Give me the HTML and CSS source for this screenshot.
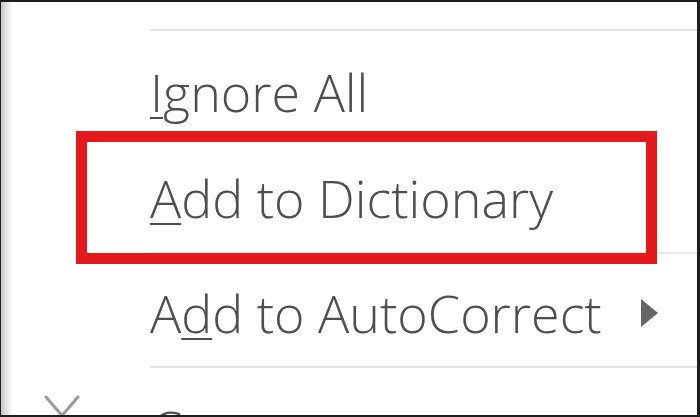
FILE: index.html
```html
<!DOCTYPE html>
<html lang="en">
<head>
<meta charset="utf-8">
<title>Spelling context menu</title>
<link rel="stylesheet" href="styles.css">
</head>
<body>
<div class="menu">
  <div class="item faded"><span class="icon"></span><span class="label">notes</span></div>
  <div class="sep first"></div>
  <div class="item ignore"><span class="icon"></span><span class="label"><u>I</u>gnore All</span></div>
  <div class="item dict"><span class="icon"></span><span class="label"><u>A</u>dd to Dictionary</span></div>
  <div class="sep mid"></div>
  <div class="item auto"><span class="icon"></span><span class="label">A<u>d</u>d to AutoCorrect</span><span class="arrow"></span></div>
  <div class="sep"></div>
  <div class="item cut">
    <span class="icon">
      <svg class="scissors" width="148" height="68" viewBox="0 0 148 68" aria-hidden="true">
        <line x1="45" y1="2" x2="70" y2="31" />
        <line x1="77" y1="2" x2="52" y2="31" />
      </svg>
    </span>
    <span class="label">Cut</span>
  </div>
  <div class="highlight"></div>
</div>
</body>
</html>
```

FILE: styles.css
```css
html, body {
  margin: 0;
  padding: 0;
  background: #ffffff;
}

.menu {
  position: relative;
  width: 700px;
  height: 417px;
  box-sizing: border-box;
  overflow: hidden;
  border-top: 2px solid #1e1e1e;
  border-right: 3px solid #1e1e1e;
  border-bottom: 2px solid #1e1e1e;
  border-left: 1px solid #1e1e1e;
  background: linear-gradient(to right, #c4c4c4 0, #dcdcdc 4px, #f4f4f4 9px, #ffffff 13px);
  font-family: "Open Sans", "Noto Sans", "Liberation Sans", sans-serif;
  font-size: 52px;
  font-weight: 300;
  color: #4e4e4e;
}

.item {
  display: grid;
  grid-template-columns: 149px 1fr auto;
  align-items: center;
  line-height: 68px;
  white-space: nowrap;
}

.icon {
  display: block;
  height: 68px;
}

.label u {
  text-decoration-thickness: 2px;
  text-underline-offset: 5px;
}

.faded {
  margin-top: -49px;
  color: #dedede;
  font-size: 40px;
}

.sep {
  height: 2px;
  margin-left: 149px;
  background: #e3e3e3;
}

.sep.first {
  margin-top: 8px;
}

.sep.mid {
  background: #e9e9e9;
}

.ignore {
  margin-top: 8px;
  padding: 19px 0 20px;
}

.dict {
  padding: 18px 0 20px;
}

.auto {
  padding: 25px 0 19px;
}

.cut {
  padding-top: 27px;
}

.arrow {
  width: 0;
  height: 0;
  margin-right: 39px;
  border-left: 17px solid #666666;
  border-top: 14px solid transparent;
  border-bottom: 14px solid transparent;
}

.scissors line {
  stroke: #9a9a9a;
  stroke-width: 3;
  stroke-linecap: round;
}

.highlight {
  position: absolute;
  left: 75px;
  top: 129px;
  width: 581px;
  height: 133px;
  box-sizing: border-box;
  border: 11px solid #e3191b;
}
```
